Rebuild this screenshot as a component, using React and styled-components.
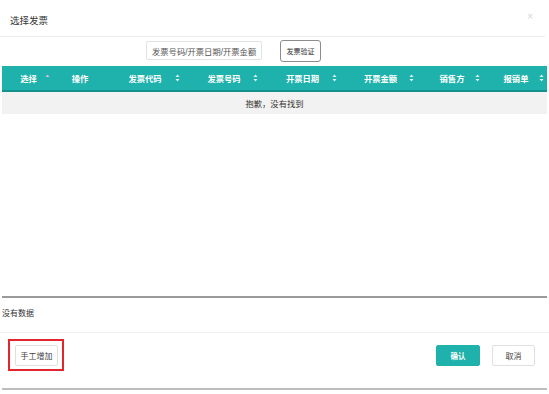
import React from "react";
import styled, { createGlobalStyle } from "styled-components";

const GlobalStyle = createGlobalStyle`
  html, body {
    margin: 0;
    padding: 0;
    background: #fff;
    font-family: "Liberation Sans", "Noto Sans CJK SC", sans-serif;
  }
`;

const Modal = styled.div`
  width: 549px;
  height: 394px;
  display: flex;
  flex-direction: column;
  overflow: hidden;
`;

const Header = styled.div`
  height: 37px;
  display: flex;
  align-items: center;
  justify-content: space-between;
  padding: 4px 12px 0 10px;
  box-sizing: border-box;
  border-bottom: 1px solid #ececec;
  margin-right: 4px;
`;

const Title = styled.span`
  font-size: 9.5px;
  color: #333;
`;

const Close = styled.span`
  font-size: 10px;
  color: #d4d4d4;
  margin-top: -8px;
`;

const Toolbar = styled.div`
  display: flex;
  align-items: flex-start;
  gap: 18px;
  padding: 3px 0 0 146px;
  height: 29px;
  box-sizing: border-box;
`;

const Search = styled.div`
  width: 116px;
  height: 19px;
  border: 1px solid #e2e2e2;
  border-radius: 2px;
  box-sizing: border-box;
  font-size: 8.3px;
  color: #555;
  display: flex;
  align-items: center;
  padding-left: 5px;
  white-space: nowrap;
  margin-top: 1px;
`;

const VerifyButton = styled.button`
  width: 41px;
  height: 22px;
  border: 1px solid #8c8c8c;
  border-radius: 3px;
  background: #fff;
  font-family: inherit;
  font-size: 7px;
  color: #333;
  padding: 0;
`;

const TableArea = styled.div`
  flex: 0 0 230px;
  margin: 0 2px;
  border-bottom: 2px solid #9a9a9a;
`;

const cols = "53px 50px 80px 78px 79px 77px 66px 62px";

const HeadRow = styled.div`
  display: grid;
  grid-template-columns: ${cols};
  height: 26px;
  background: #1fb1ab;
  border-bottom: 2px solid #13928d;
  box-sizing: border-box;
`;

const HeadCell = styled.div`
  position: relative;
  display: flex;
  align-items: center;
  justify-content: center;
  font-size: 8.3px;
  font-weight: bold;
  color: #fff;
`;

const SortIcon = styled.svg`
  position: absolute;
  right: ${(p) => p.$right}px;
  top: 50%;
  margin-top: -4px;
`;

const EmptyRow = styled.div`
  height: 22px;
  background: #f2f2f2;
  display: flex;
  align-items: center;
  justify-content: center;
  font-size: 8.3px;
  color: #333;
`;

const NoData = styled.div`
  height: 35px;
  display: flex;
  align-items: center;
  padding: 0 0 5px 2px;
  box-sizing: border-box;
  font-size: 8px;
  color: #333;
  border-bottom: 1px solid #f0f0f0;
`;

const Footer = styled.div`
  height: 57px;
  display: flex;
  align-items: flex-start;
  justify-content: space-between;
  padding: 6px 12px 0 8px;
  margin: 0 2px;
  box-sizing: border-box;
  border-bottom: 2px solid #bdbdbd;
`;

const Highlight = styled.div`
  border: 2px solid #e3262d;
  padding: 4px 4px 3px 5px;
  margin-left: -2px;
`;

const Button = styled.button`
  width: ${(p) => p.$w}px;
  height: 21px;
  border: 1px solid ${(p) => (p.$primary ? "#1fb1ab" : "#e0e0e0")};
  border-radius: 2px;
  background: ${(p) => (p.$primary ? "#1fb1ab" : "#fff")};
  color: ${(p) => (p.$primary ? "#fff" : "#444")};
  font-family: inherit;
  font-size: ${(p) => (p.$primary ? "7.5px" : "8px")};
  font-weight: ${(p) => (p.$primary ? "bold" : "normal")};
  padding: 0;
  display: block;
`;

const Actions = styled.div`
  display: flex;
  gap: 12px;
  margin-top: 6px;
`;

const Sort = ({ right, faint }) => (
  <SortIcon $right={right} width="5" height="8" viewBox="0 0 5 8">
    <path d="M2.5 0.5 L4.5 3 L0.5 3 Z" fill={faint ? "#e7b8d6" : "#e3f4f3"} />
    {!faint && <path d="M2.5 7.5 L4.5 5 L0.5 5 Z" fill="#e3f4f3" />}
  </SortIcon>
);

const headers = [
  { label: "选择", sort: "faint", right: 5 },
  { label: "操作" },
  { label: "发票代码", sort: true, right: 5 },
  { label: "发票号码", sort: true, right: 5 },
  { label: "开票日期", sort: true, right: 5 },
  { label: "开票金额", sort: true, right: 5 },
  { label: "销售方", sort: true, right: 5 },
  { label: "报销单", sort: true, right: 3 },
];

export default function App() {
  return (
    <>
      <GlobalStyle />
      <Modal>
        <Header>
          <Title>选择发票</Title>
          <Close>×</Close>
        </Header>
        <Toolbar>
          <Search>发票号码/开票日期/开票金额</Search>
          <VerifyButton>发票验证</VerifyButton>
        </Toolbar>
        <TableArea>
          <HeadRow>
            {headers.map((h) => (
              <HeadCell key={h.label}>
                {h.label}
                {h.sort && <Sort right={h.right} faint={h.sort === "faint"} />}
              </HeadCell>
            ))}
          </HeadRow>
          <EmptyRow>抱歉，没有找到</EmptyRow>
        </TableArea>
        <NoData>没有数据</NoData>
        <Footer>
          <Highlight>
            <Button $w={43}>手工增加</Button>
          </Highlight>
          <Actions>
            <Button $primary $w={44}>确认</Button>
            <Button $w={43}>取消</Button>
          </Actions>
        </Footer>
      </Modal>
    </>
  );
}
